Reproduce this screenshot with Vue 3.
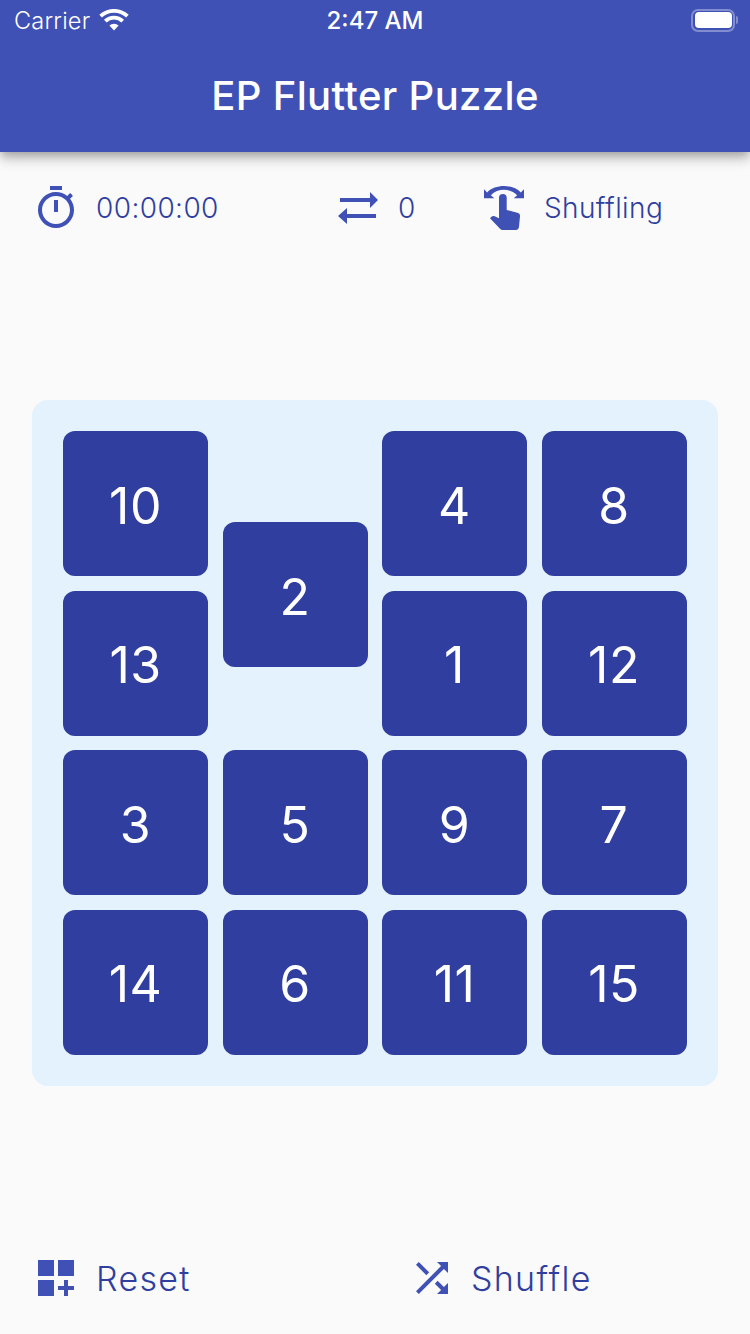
<template>
  <div class="screen">
    <header class="app-header">
      <div class="status-bar">
        <div class="status-left">
          <span>Carrier</span>
          <svg class="wifi" viewBox="0 0 30 22">
            <path d="M15 21.5 10.4 16.6a6.6 6.6 0 0 1 9.2 0zM7.6 13.6 5 10.8a14.4 14.4 0 0 1 20 0l-2.6 2.8a10.6 10.6 0 0 0-14.8 0zM2.9 8.6 .3 5.8a21.4 21.4 0 0 1 29.4 0l-2.6 2.8a17.6 17.6 0 0 0-24.2 0z" />
          </svg>
        </div>
        <span class="clock">2:47 AM</span>
        <div class="battery">
          <div class="battery-shell"><div class="battery-fill"></div></div>
          <div class="battery-tip"></div>
        </div>
      </div>
      <div class="app-bar">EP Flutter Puzzle</div>
    </header>

    <section class="stats">
      <div class="stat">
        <svg class="icon" viewBox="0 0 24 24">
          <path d="M15 1H9v2h6V1zm-4 13h2V8h-2v6zm8.03-6.61l1.42-1.42c-.43-.51-.9-.99-1.41-1.41l-1.42 1.42C16.07 4.74 14.12 4 12 4c-4.97 0-9 4.03-9 9s4.02 9 9 9 9-4.03 9-9c0-2.12-.74-4.07-1.97-5.61zM12 20c-3.87 0-7-3.13-7-7s3.13-7 7-7 7 3.13 7 7-3.13 7-7 7z" />
        </svg>
        <span>00:00:00</span>
      </div>
      <div class="stat">
        <svg class="icon" viewBox="0 0 24 24">
          <path d="M3 7h15V4l4 4-4 4V9H3zM21 15H6.500v-3L2 16l4.500 4v-3H21z" />
        </svg>
        <span>0</span>
      </div>
      <div class="stat">
        <svg class="icon" viewBox="0 0 48 48">
          <path d="M4 5.300 7.200 8.400C15 0 33 0 40.800 8.400L44 5.300v9H33.700l3.500-3.100C30 4 18 4 10.800 11.200l3.500 3.100H4z" />
          <path d="M19 13.800a3.850 3.850 0 0 1 7.700 0V26l10.600 2.800c2 .5 2.900 1.500 2.700 3.500l-1 10.500c-.2 1.800-1.300 3.200-3 3.200H23c-1.200 0-2.200-.5-3-1.300L10 34.300l1.500-1.500c1-1 2-1 3.200-.5l4.300 2z" />
        </svg>
        <span>Shuffling</span>
      </div>
    </section>

    <section class="board">
      <div v-for="tile in tiles" :key="tile.n" class="cell">
        <div class="tile" :style="{ transform: 'translateY(' + tile.slide + 'px)' }">{{ tile.n }}</div>
      </div>
    </section>

    <footer class="actions">
      <div class="action">
        <svg class="icon" viewBox="0 0 24 24">
          <path d="M3 3h8v8H3zm10 0h8v8h-8zM3 13h8v8H3zm15 0h-2v3h-3v2h3v3h2v-3h3v-2h-3z" />
        </svg>
        <span>Reset</span>
      </div>
      <div class="action">
        <svg class="icon" viewBox="0 0 24 24">
          <path d="M10.59 9.170L5.410 4 4 5.410l5.170 5.170 1.420-1.410zM14.500 4l2.040 2.040L4 18.590 5.410 20 17.960 7.460 20 9.500V4h-5.500zm.33 9.410l-1.410 1.410 3.130 3.130L14.500 20H20v-5.500l-2.040 2.040-3.130-3.130z" />
        </svg>
        <span>Shuffle</span>
      </div>
    </footer>
  </div>
</template>

<script setup>
// Board order as shown, row by row. Tile 2 is caught mid-slide during the shuffle.
const order = [10, 2, 4, 8, 13, 0, 1, 12, 3, 5, 9, 7, 14, 6, 11, 15]
const tiles = order.filter((n) => n !== 0).map((n) => ({ n, slide: n === 2 ? 91 : 0 }))
</script>

<style>
html, body { margin: 0; background: #fafafa; }
</style>

<style scoped>
.screen {
  width: 750px; height: 1334px; overflow: hidden; display: flex; flex-direction: column;
  background: #fafafa; color: #303f9f;
  font-family: Inter, "Liberation Sans", sans-serif;
}
.app-header {
  background: #3f51b5; color: #fff; position: relative; z-index: 1;
  box-shadow: 0 4px 8px -2px rgba(0,0,0,0.2), 0 8px 10px 0 rgba(0,0,0,0.14), 0 2px 20px 0 rgba(0,0,0,0.12);
}
.status-bar {
  height: 40px; display: grid; grid-template-columns: 1fr auto 1fr; align-items: center;
  padding: 0 12px 0 14px; font-size: 24px;
}
.status-left { display: flex; align-items: center; gap: 9px; font-size: 23.5px; font-weight: 300; letter-spacing: 0.2px; }
.wifi { width: 30px; height: 22px; fill: #fff; }
.clock { font-weight: 500; transform: translateX(-1px); }
.battery { justify-self: end; display: flex; align-items: center; gap: 1px; }
.battery-shell {
  width: 44px; height: 23px; box-sizing: border-box; padding: 1.5px;
  border: 2px solid rgba(255,255,255,0.35); border-radius: 7px;
}
.battery-fill { height: 100%; background: #fff; border-radius: 4px; }
.battery-tip { width: 2px; height: 8px; background: rgba(255,255,255,0.35); border-radius: 0 2px 2px 0; }
.app-bar {
  height: 112px; display: flex; align-items: center; justify-content: center;
  font-size: 40px; font-weight: 500; letter-spacing: 0.35px; padding-bottom: 2px; box-sizing: border-box;
}
.icon { width: 48px; height: 48px; fill: #3f51b5; flex-shrink: 0; }
.stats {
  display: grid; grid-template-columns: 302px 146px 1fr;
  padding: 32px 0 0 32px; font-size: 28px; font-weight: 300; letter-spacing: 0.4px;
}
.stat { display: flex; align-items: center; gap: 16px; height: 48px; }
.board {
  margin: 168px 32px 0; padding: 31px; border-radius: 16px; background: #e3f2fd;
  display: grid; grid-template-columns: repeat(4, 145px); grid-auto-rows: 145px; gap: 14.5px;
}
.cell:nth-child(5) { grid-column: 1; }
.cell:nth-child(6) { grid-column: 3; }
.tile {
  height: 100%; box-sizing: border-box; padding-top: 4px; display: flex; align-items: center; justify-content: center;
  background: #303f9f; color: #fff; border-radius: 12px; font-size: 50px; letter-spacing: 0.5px;
}
.actions {
  display: grid; grid-template-columns: 376px 1fr;
  margin-top: 168px; padding-left: 32px; font-size: 34px; letter-spacing: 1.3px; font-weight: 300;
}
.action { display: flex; align-items: center; gap: 16px; height: 48px; }
.action:nth-child(2) { gap: 15px; }
.action span { padding-top: 2px; }
</style>
